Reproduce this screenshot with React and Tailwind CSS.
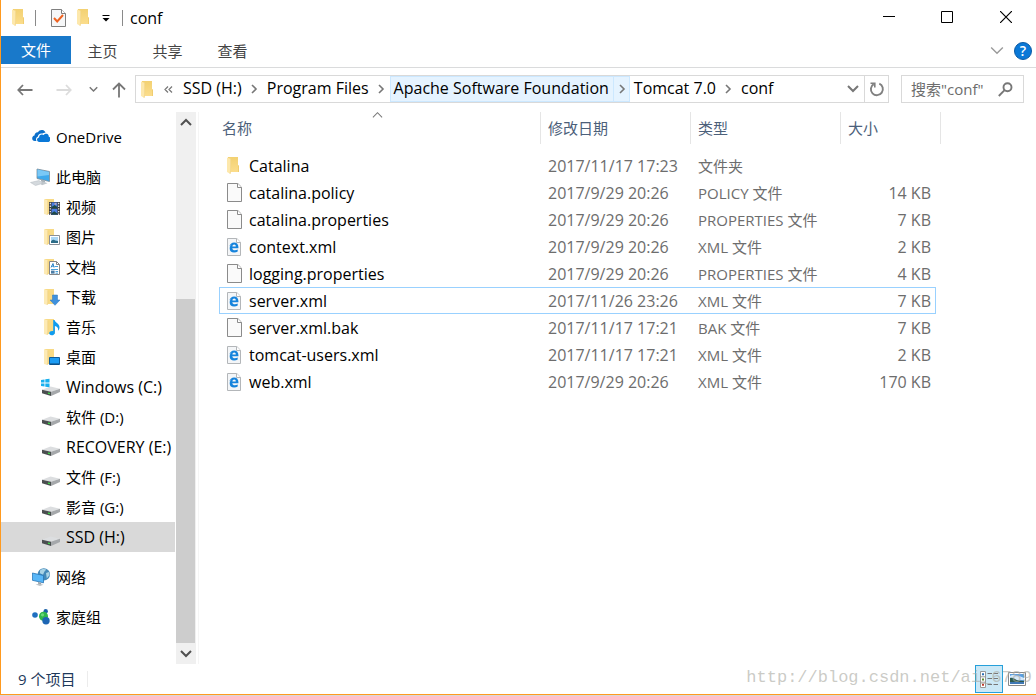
import React from "react";

function Folder({ className = "h-[17px] w-[13px]" }) {
  return (
    <svg className={className} viewBox="0 0 13 17" aria-hidden="true">
      <defs>
        <linearGradient id="folderBody" x1="0" y1="0" x2="0" y2="1">
          <stop offset="0" stopColor="#f3d172" />
          <stop offset="1" stopColor="#fbdd8c" />
        </linearGradient>
      </defs>
      <path d="M1 0h10v8.5h1V15H1z" fill="url(#folderBody)" />
      <path d="M11 8.500h1V15h-1z" fill="#f0cd70" />
      <path d="M0 0.500 4 2v12l-.5 3L0 15z" fill="#fde8ac" />
      <path d="M3.600 2v12l-.6 2.800" fill="none" stroke="#efcf7c" strokeWidth=".6" />
    </svg>
  );
}

function FolderWith({ children }) {
  return (
    <svg className="h-[18px] w-[18px]" viewBox="0 0 18 18" aria-hidden="true">
      <path d="M3 1h9v9h1v6H3z" fill="#f8da86" />
      <path d="M2 1l4 1.500V15l-.5 2L2 16z" fill="#fdeab4" />
      <path d="M5.700 2.500V15l-.5 2" fill="none" stroke="#efcf7c" strokeWidth=".6" />
      {children}
    </svg>
  );
}

const VideoIcon = () => (
  <FolderWith>
    <path d="M7 4h11v13H7z" fill="#3c3c3c" />
    <path d="M9.600 4.600h5.800v5.600H9.600zM9.600 11h5.800v5.400H9.600z" fill="#4b7ee0" />
    <path d="M9.600 9l3-2 2.800 2v1.200H9.600zM9.600 15.200l2.600-2 3.200 2.400v.8H9.600z" fill="#1f4a45" />
    <path d="M12.600 5.200h1.800v1.400h-1.800z" fill="#e4b3a0" />
    <path d="M8.300 4.800V17M16.700 4.800V17" stroke="#fff" strokeWidth="1.100" strokeDasharray="1.400 1.300" />
  </FolderWith>
);
const PictureIcon = () => (
  <FolderWith>
    <path d="M7.500 7.500h10v9h-10z" fill="#fff" stroke="#8a8f96" />
    <path d="M9 9h7v6H9z" fill="#a9d6f5" />
    <path d="M9 13.200c2-2 3-1.800 4.200-.8l2.800.7V15H9z" fill="#2c6c87" />
  </FolderWith>
);
const DocumentIcon = () => (
  <FolderWith>
    <path d="M7.500 3.500h7l3 3v10h-10z" fill="#fff" stroke="#868686" />
    <path d="M14.500 3.500v3h3" fill="none" stroke="#868686" />
    <path d="M9 9.500 11 5.500l1 4M9.600 8.200h2" fill="none" stroke="#2c86c8" />
    <path d="M12.500 8.500H16M9 11.500h7M13.500 13.500H16M13.500 15.200H16" stroke="#4aa0d8" />
    <path d="M9 12.600h3.600v3H9z" fill="#4b7da6" />
  </FolderWith>
);
const DownloadIcon = () => (
  <FolderWith>
    <path d="M10.500 7h5v5H18l-5 5.300L8 12h2.500z" fill="#3f91dd" stroke="#2b75bd" strokeWidth=".5" />
  </FolderWith>
);
const MusicIcon = () => (
  <FolderWith>
    <path d="M11.200 2h1.400c.4 2.600 5 3.800 4.900 7.200 0 1.700-.8 2.800-1.600 3.600.8-3-1-4.400-3-4.800v6.400c0 1.800-1.600 3-3.300 2.900-1.500 0-2.500-1-2.400-2.200.2-1.600 2.200-2.500 4-1.900z" fill="#0e9cf0" />
  </FolderWith>
);
const DesktopIcon = () => (
  <FolderWith>
    <path d="M7.500 9.500h10v7h-10z" fill="#1c9cf4" stroke="#0c5d9e" />
    <path d="M8 16h9" stroke="#0b4678" />
  </FolderWith>
);
const OneDriveIcon = () => (
  <svg className="h-[18px] w-[18px]" viewBox="0 0 18 18" aria-hidden="true">
    <path d="M4.400 13H2.800A2.800 2.800 0 0 1 .2 10.200c0-1.500 1-2.500 2.300-2.800C2.600 5.400 4 4 6 4.200 7 2.500 8.600 1.700 10.400 2c1.600.3 2.700 1.300 3.100 2.700-1.200-.2-2.200.1-3 .9C7.900 4.900 5.900 6.600 5.900 8.600c-1.700.6-2.400 2.700-1.500 4.400z" fill="#0b6fca" />
    <path d="M7.400 14c-1.500 0-2.400-1-2.400-2.200 0-1.300.9-2.200 2.100-2.300-.1-1.900 1.200-3.200 2.900-3.100.7 0 1.300.3 1.700.7.7-1 1.700-1.500 2.900-1.300 1.300.2 2.200 1.300 2.200 2.900 1 .3 1.600 1.200 1.600 2.400 0 1.700-1 2.900-2.500 2.900z" fill="#0a78d7" />
  </svg>
);
const ComputerIcon = () => (
  <svg className="h-[18px] w-[20px]" viewBox="0 0 20 18" aria-hidden="true">
    <path d="M7 1l12.500 2.500v10L7 10.500z" fill="#3fa9ec" stroke="#7d8c96" strokeWidth=".8" />
    <path d="M7.500 1.600l11.500 2.300v3L7.500 8.500z" fill="#7ac8f6" />
    <path d="M11 11.500l4 1v2l-4-1z" fill="#a7b0b6" />
    <path d="M9 14.500l5-.8 3.500 1.500-5.500 2z" fill="#c0c7cc" />
    <path d="M.5 14.500 9 12.500l4 2.700L5.500 17.500z" fill="#d4d9dd" stroke="#b3bac0" strokeWidth=".5" />
  </svg>
);
const Drive = () => (
  <g>
    <path d="M1 11.800 9.500 8.500 19 10.800l-9 3z" fill="#dcdee0" />
    <path d="M1 11.800l9 2V18L1 15.300z" fill="#4b4e50" />
    <path d="M10 13.800l9-3v3.300L10 18z" fill="#a5a8ab" />
    <path d="M7 15.200l2 .5" stroke="#3fe04a" strokeWidth="1.300" />
  </g>
);
const DriveIcon = () => (
  <svg className="h-[18px] w-[19px]" viewBox="0 0 19 18" aria-hidden="true"><Drive /></svg>
);
const WindowsDriveIcon = () => (
  <svg className="h-[18px] w-[19px]" viewBox="0 0 19 18" aria-hidden="true">
    <Drive />
    <path d="M0 1.900l3.500-.5v3.200H0zM4.300 1.300 8.500.7v3.900H4.300zM0 5.400h3.500v3.200L0 8.100zM4.300 5.400h4.200v3.900l-4.200-.6z" fill="#19b0ee" />
  </svg>
);
const NetworkIcon = () => (
  <svg className="h-[18px] w-[18px]" viewBox="0 0 18 18" aria-hidden="true">
    <circle cx="11.800" cy="6.400" r="6.200" fill="#4489b8" />
    <path d="M8 2.500C10 .6 13 .8 14.300 1.600l-2 2.200-1.300 3-3-1.500zM14 5l3-1 .6 3-2.800 3.500z" fill="#a9d3e6" />
    <path d="M.4 5 11.500 7.500v7.300L.4 12.300z" fill="#58b6f7" stroke="#2573b5" strokeWidth=".8" />
    <path d="M6 14l3 .8.300 1.500-3.300-.6z" fill="#98a1a8" />
    <path d="M3.500 16.600l4-.9 4 1-3.500 1.200z" fill="#b9c0c5" />
  </svg>
);
const HomeGroupIcon = () => (
  <svg className="h-[18px] w-[18px]" viewBox="0 0 18 18" aria-hidden="true">
    <circle cx="3" cy="7" r="2.800" fill="#1f6fc0" />
    <circle cx="13.700" cy="3.200" r="2.200" fill="#1a61a8" />
    <circle cx="11.500" cy="8.300" r="4.500" fill="#30b64a" />
    <circle cx="14" cy="12.700" r="3.700" fill="#1d66b4" />
    <circle cx="10.500" cy="6.800" r="1.600" fill="#6bd77a" />
  </svg>
);

function PlainFileIcon() {
  return (
    <svg className="h-[19px] w-[15px]" viewBox="0 0 15 19" aria-hidden="true">
      <path d="M.5.5h10.300l3.700 3.700v14.300H.5z" fill="#fafafa" stroke="#8b8b8b" />
      <path d="M10.500.5v4h4" fill="#fff" stroke="#8b8b8b" />
    </svg>
  );
}

function XmlFileIcon() {
  return (
    <svg className="h-[18px] w-[14px]" viewBox="0 0 14 18" aria-hidden="true">
      <path d="M.5.5h9.300l3.700 3.700v13.300H.5z" fill="#f4f6f8" stroke="#b3b6b9" />
      <path d="M9.500.5v4h4" fill="#fff" stroke="#b3b6b9" />
      <path d="M2.400 8.900C2.800 6 4.700 4.400 7.100 4.400c2.700 0 4.300 1.900 4.300 4.500v1.300H5.300c.1 1.400 1.200 2.100 2.500 2.100 1.100 0 2-.3 2.900-.8v2.100c-1 .6-2.200.9-3.600.9-2.800 0-4.400-1.600-4.400-4.100 0-1.700.8-3 2.200-3.800-1.100.4-2 1.300-2.500 2.300zm3-.5h3.400c0-1.200-.6-1.900-1.600-1.900s-1.600.700-1.800 1.900z" fill="#1583dc" />
    </svg>
  );
}

function Chevron({ dir, className, width = 2 }) {
  const d = {
    down: "M1 3l5 5 5-5",
    up: "M1 8l5-5 5 5",
    right: "M4 2l4 4-4 4",
  }[dir];
  return (
    <svg className={className} viewBox="0 0 12 12" fill="none" stroke="currentColor" strokeWidth={width} aria-hidden="true">
      <path d={d} />
    </svg>
  );
}

const places = [
  { items: [{ label: "OneDrive", Icon: OneDriveIcon, root: true }] },
  {
    items: [
      { label: "此电脑", Icon: ComputerIcon, root: true },
      { label: "视频", Icon: VideoIcon },
      { label: "图片", Icon: PictureIcon },
      { label: "文档", Icon: DocumentIcon },
      { label: "下载", Icon: DownloadIcon },
      { label: "音乐", Icon: MusicIcon },
      { label: "桌面", Icon: DesktopIcon },
      { label: "Windows (C:)", Icon: WindowsDriveIcon, latin: true },
      { label: "软件 (D:)", Icon: DriveIcon },
      { label: "RECOVERY (E:)", Icon: DriveIcon, latin: true },
      { label: "文件 (F:)", Icon: DriveIcon },
      { label: "影音 (G:)", Icon: DriveIcon },
      { label: "SSD (H:)", Icon: DriveIcon, latin: true, selected: true },
    ],
  },
  { items: [{ label: "网络", Icon: NetworkIcon, root: true }] },
  { items: [{ label: "家庭组", Icon: HomeGroupIcon, root: true }] },
];

const files = [
  { name: "Catalina", date: "2017/11/17 17:23", type: "文件夹", size: "", kind: "folder" },
  { name: "catalina.policy", date: "2017/9/29 20:26", type: "POLICY 文件", size: "14 KB" },
  { name: "catalina.properties", date: "2017/9/29 20:26", type: "PROPERTIES 文件", size: "7 KB" },
  { name: "context.xml", date: "2017/9/29 20:26", type: "XML 文件", size: "2 KB", kind: "xml" },
  { name: "logging.properties", date: "2017/9/29 20:26", type: "PROPERTIES 文件", size: "4 KB" },
  { name: "server.xml", date: "2017/11/26 23:26", type: "XML 文件", size: "7 KB", kind: "xml", focused: true },
  { name: "server.xml.bak", date: "2017/11/17 17:21", type: "BAK 文件", size: "7 KB" },
  { name: "tomcat-users.xml", date: "2017/11/17 17:21", type: "XML 文件", size: "2 KB", kind: "xml" },
  { name: "web.xml", date: "2017/9/29 20:26", type: "XML 文件", size: "170 KB", kind: "xml" },
];

function TitleBar() {
  return (
    <header className="flex h-9 items-start">
      <div className="flex h-[35px] flex-1 items-center pl-[11px]">
        <Folder />
        <span className="ml-[10px] h-4 w-px bg-[#8a8a8a]" />
        <button type="button" aria-label="属性" className="ml-[15px]">
          <svg className="h-[18px] w-[15px]" viewBox="0 0 15 18" aria-hidden="true">
            <path d="M.5.5h10l4 4v13H.5z" fill="#f6f7f8" stroke="#7f7f7f" />
            <path d="M10.500.5v4h4" fill="#fff" stroke="#7f7f7f" />
            <path d="M3 9l3.200 3.500L12 6" fill="none" stroke="#ee6322" strokeWidth="2" />
          </svg>
        </button>
        <button type="button" aria-label="新建文件夹" className="ml-[11px]"><Folder /></button>
        <button type="button" aria-label="自定义快速访问工具栏" className="ml-[12px]">
          <svg className="h-[8px] w-[8px]" viewBox="0 0 8 8" aria-hidden="true">
            <path d="M.5 1.500h7" stroke="#000" />
            <path d="M.5 4h7L4 7.500z" />
          </svg>
        </button>
        <span className="ml-[12px] h-4 w-px bg-[#8a8a8a]" />
        <h1 className="ml-[7px] text-[16px] leading-5 text-black">conf</h1>
      </div>
      <button type="button" aria-label="最小化" className="flex h-[34px] w-[58px] items-center justify-center">
        <svg className="h-3 w-3" viewBox="0 0 12 12" aria-hidden="true"><path d="M0 5.500h12" stroke="#000" /></svg>
      </button>
      <button type="button" aria-label="最大化" className="flex h-[34px] w-[58px] items-center justify-center">
        <svg className="h-3 w-3" viewBox="0 0 12 12" aria-hidden="true"><path d="M.5.5h11v11H.5z" fill="none" stroke="#000" /></svg>
      </button>
      <button type="button" aria-label="关闭" className="flex h-[34px] w-[60px] items-center justify-center">
        <svg className="h-3 w-3" viewBox="0 0 12 12" aria-hidden="true"><path d="M0 0l12 12M12 0 0 12" stroke="#000" strokeWidth="1.200" /></svg>
      </button>
    </header>
  );
}

function Ribbon() {
  return (
    <div className="flex h-8 items-start border-b border-[#dadbdc]">
      <button type="button" className="h-7 w-[70px] bg-[#1979ca] text-white">文件</button>
      <div className="flex">
        {["主页", "共享", "查看"].map((t) => (
          <button key={t} type="button" className="h-[30px] w-[65px] pr-[2px] text-[#444]">{t}</button>
        ))}
      </div>
      <button type="button" aria-label="展开功能区" className="ml-auto mr-[10px] flex h-[30px] items-center text-[#9a9a9a]">
        <Chevron dir="down" className="h-[14px] w-[14px]" width={1.200} />
      </button>
      <button type="button" aria-label="帮助" className="mr-1 flex h-[30px] items-center">
        <span className="flex h-[18px] w-[18px] items-center justify-center rounded-full border border-[#0c5ba5] bg-[#0a78d7] text-[14px] font-semibold leading-4 text-white">?</span>
      </button>
    </div>
  );
}

function Crumb({ label, active, last }) {
  return (
    <li className={active ? "flex h-[26px] items-center bg-[#e5f3ff] outline outline-1 -outline-offset-1 outline-[#cce8ff]" : "flex h-[26px] items-center"}>
      <button type="button" className="h-full whitespace-nowrap px-1 pb-[2px] text-[16px] text-black">{label}</button>
      {!last && (
        <span className={active ? "flex h-full w-[17px] items-center justify-center border-l border-[#cce8ff] text-[#777]" : "flex h-full w-[17px] items-center justify-center text-[#777]"}>
          <Chevron dir="right" className="h-3 w-3" width={1.600} />
        </span>
      )}
    </li>
  );
}

function AddressRow() {
  return (
    <div className="flex h-11 items-start pr-3 pt-[7px]">
      <div className="flex h-7 w-[134px] shrink-0 items-center pt-px text-[#777]">
        <button type="button" aria-label="后退" className="ml-4">
          <svg className="h-4 w-4" viewBox="0 0 16 16" fill="none" stroke="#777" strokeWidth="1.800" aria-hidden="true"><path d="M15.500 8H1.500M6 3 1.300 8 6 13" /></svg>
        </button>
        <button type="button" aria-label="前进" className="ml-[23px]">
          <svg className="h-4 w-4" viewBox="0 0 16 16" fill="none" stroke="#dcdcdc" strokeWidth="1.800" aria-hidden="true"><path d="M.5 8h14M10 3l4.700 5-4.700 5" /></svg>
        </button>
        <button type="button" aria-label="最近位置" className="ml-[17px]">
          <Chevron dir="down" className="h-[9px] w-[9px]" />
        </button>
        <button type="button" aria-label="向上" className="ml-[14px]">
          <svg className="h-4 w-[14px]" viewBox="0 0 14 16" fill="none" stroke="#777" strokeWidth="1.800" aria-hidden="true"><path d="M7 15.500V1.500M1 7.500l6-6 6 6" /></svg>
        </button>
      </div>
      <nav aria-label="地址" className="flex h-7 min-w-0 flex-1 items-center border border-[#d9d9d9] pl-[5px]">
        <Folder />
        <button type="button" aria-label="更多位置" className="ml-[10px] mr-[6px] text-[#777]">
          <svg className="h-[9px] w-[9px]" viewBox="0 0 9 9" fill="none" stroke="currentColor" strokeWidth="1.200" aria-hidden="true"><path d="M4 1.500l-3 3 3 3M8 1.500l-3 3 3 3" /></svg>
        </button>
        <ol className="flex">
          <Crumb label="SSD (H:)" />
          <Crumb label="Program Files" />
          <Crumb label="Apache Software Foundation" active />
          <Crumb label="Tomcat 7.0" />
          <Crumb label="conf" last />
        </ol>
        <button type="button" aria-label="以前的位置" className="ml-auto mr-[5px] text-[#777]">
          <Chevron dir="down" className="h-3 w-3" />
        </button>
        <button type="button" aria-label="刷新" className="flex h-full w-6 shrink-0 items-center justify-center border-l border-[#d9d9d9]">
          <svg className="h-4 w-4" viewBox="0 0 16 16" fill="none" stroke="#808080" strokeWidth="1.900" aria-hidden="true">
            <path d="M10.300 2.700a6 6 0 1 1-5.600.4" />
            <path d="M1.500 2.200h4.300v4.300" strokeWidth="1.600" />
          </svg>
        </button>
      </nav>
      <div className="ml-3 flex h-7 w-[123px] shrink-0 items-center border border-[#d9d9d9] pl-[9px] pr-[10px]">
        <input type="text" aria-label="搜索" placeholder={'搜索"conf"'} className="min-w-0 flex-1 bg-transparent outline-none placeholder:text-[#6d6d6d]" />
        <svg className="h-[15px] w-[15px] shrink-0" viewBox="0 0 15 15" fill="none" stroke="#777" strokeWidth="1.900" aria-hidden="true">
          <circle cx="9.500" cy="5.300" r="4" /><path d="M6.600 8.200.8 14" />
        </svg>
      </div>
    </div>
  );
}

function Sidebar() {
  return (
    <nav aria-label="导航窗格" className="flex w-[174px] shrink-0 flex-col gap-[10px] pt-[10px]">
      {places.map((g) => (
        <ul key={g.items[0].label}>
          {g.items.map(({ label, Icon, root, latin, selected }) => (
            <li key={label} className={selected ? "bg-[#d9d9d9]" : ""}>
              <a href="#" className={root ? "flex h-[30px] items-center gap-[6px] pl-[31px] text-black" : "flex h-[30px] items-center gap-[6px] pl-[41px] text-black"}>
                <span className="flex w-[18px] shrink-0 justify-end"><span className="shrink-0"><Icon /></span></span>
                <span className={latin ? "whitespace-nowrap text-[16px]" : "whitespace-nowrap"}>{label}</span>
              </a>
            </li>
          ))}
        </ul>
      ))}
    </nav>
  );
}

function ScrollTrack() {
  return (
    <div className="ml-px flex w-5 shrink-0 flex-col bg-[#f0f0f0] pr-px text-[#505050]">
      <button type="button" aria-label="向上滚动" className="flex h-[21px] shrink-0 items-center justify-center">
        <Chevron dir="up" className="h-3 w-3" />
      </button>
      <div className="flex flex-1 flex-col">
        <div className="grow-[166]" />
        <div className="grow-[345] bg-[#cdcdcd]" />
      </div>
      <button type="button" aria-label="向下滚动" className="flex h-[21px] shrink-0 items-center justify-center">
        <Chevron dir="down" className="h-3 w-3" />
      </button>
    </div>
  );
}

function FileTable() {
  const th = "h-10 p-0 text-left align-top font-normal text-[#4c607a]";
  const cell = "flex h-8 items-center border-r border-[#e5e5e5]";
  return (
    <div className="min-w-0 flex-1 pl-5">
      <table className="w-[722px] table-fixed border-separate border-spacing-0">
        <colgroup>
          <col className="w-[322px]" />
          <col className="w-[150px]" />
          <col className="w-[150px]" />
          <col className="w-[95px]" />
          <col className="w-[5px]" />
        </colgroup>
        <thead>
          <tr>
            <th className={th} aria-sort="ascending">
              <div className={cell + " relative pl-[3px]"}>
                名称
                <Chevron dir="up" className="absolute left-[153px] top-[-2px] h-[11px] w-[11px] text-[#777]" width={1.100} />
              </div>
            </th>
            <th className={th}><div className={cell + " pl-[7px]"}>修改日期</div></th>
            <th className={th}><div className={cell + " pl-[7px]"}>类型</div></th>
            <th className={th} colSpan={2}><div className={cell + " pl-[7px]"}>大小</div></th>
          </tr>
        </thead>
        <tbody>
          {files.map((f) => {
            const line = f.focused ? "h-[27px] whitespace-nowrap border-y border-[#99d1ff] py-0 leading-5" : "h-[27px] whitespace-nowrap border-y border-transparent py-0 leading-5";
            return (
              <tr key={f.name}>
                <td className={line + " border-l pl-[7px] text-[16px] text-black"}>
                  <div className="flex items-center gap-[7px]">
                    <span className="flex w-[15px] shrink-0">
                      {f.kind === "folder" ? <Folder /> : f.kind === "xml" ? <XmlFileIcon /> : <PlainFileIcon />}
                    </span>
                    {f.name}
                  </div>
                </td>
                <td className={line + " pl-[7px] text-[16px] text-[#6d6d6d]"}>{f.date}</td>
                <td className={line + " pl-[7px] text-[#6d6d6d]"}>{f.type}</td>
                <td className={line + " border-r pr-1 text-right text-[16px] text-[#6d6d6d]"}>{f.size}</td>
                <td className="p-0" />
              </tr>
            );
          })}
        </tbody>
      </table>
    </div>
  );
}

function StatusBar() {
  return (
    <footer className="relative flex h-[30px] items-center pl-[17px] text-[#1e395b]">
      <span>9 个项目</span>
      <span className="ml-3 h-4 w-px bg-[#ececec]" />
      <div className="ml-auto flex items-center pr-[10px]">
        <button type="button" aria-label="详细信息" aria-pressed="true" className="flex h-7 w-7 items-center justify-center border border-[#26a0da] bg-[#cbe8f6]">
          <svg className="h-[17px] w-[20px]" viewBox="0 0 20 17" aria-hidden="true">
            <path d="M1.500.5h5v16h-5z" fill="#fff" stroke="#999" />
            <path d="M1.500 5.800h5M1.500 11.200h5" stroke="#999" />
            <path d="M3 2.200h2v2H3z" fill="#2d6fb5" /><path d="M3 7.500h2v2H3z" fill="#5c8a2e" /><path d="M3 12.800h2v2H3z" fill="#c23a2e" />
            <path d="M8.500 2.500h4.500M14.500 2.500H19M8.500 7.500h4.500M14.500 7.500H19M8.500 13.500h4.500M14.500 13.500H19" stroke="#777" />
          </svg>
        </button>
        <button type="button" aria-label="大图标" className="ml-[5px]">
          <svg className="h-[14px] w-[18px]" viewBox="0 0 18 14" aria-hidden="true">
            <path d="M.5.5h17v13H.5z" fill="#fff" stroke="#888" />
            <path d="M2 2h14v10H2z" fill="#5c9fe2" />
            <path d="M4 3c4 0 7 1 12 3v2H2V4z" fill="#d5e9fa" />
            <path d="M2 6c3-1 5 1.500 8 2.500l6 .5v1H2z" fill="#2e5a4c" />
            <path d="M2 10h14v2H2z" fill="#3f78b5" />
          </svg>
        </button>
      </div>
      <span className="pointer-events-none absolute bottom-1 right-1 whitespace-nowrap font-['Liberation_Mono',monospace] text-[17px] leading-6 text-[#a8a8a0]/60">http://blog.csdn.net/ai_6789</span>
    </footer>
  );
}

export default function App() {
  return (
    <div className="flex min-h-screen flex-col border-b border-[#d8d8d8] bg-white font-['Open_Sans','Noto_Sans_CJK_SC',sans-serif] text-[15px] leading-5">
      <div className="flex flex-1 flex-col border-b border-l border-[#ff9a1f]">
        <TitleBar />
        <Ribbon />
        <AddressRow />
        <main className="flex flex-1">
          <Sidebar />
          <ScrollTrack />
          <div className="ml-[2px] flex min-w-0 flex-1 border-l border-[#f5f5f5]">
            <FileTable />
          </div>
        </main>
        <StatusBar />
      </div>
    </div>
  );
}
